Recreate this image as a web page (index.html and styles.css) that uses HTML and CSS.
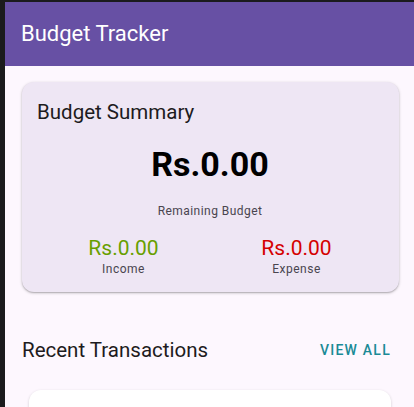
FILE: index.html
```html
<!DOCTYPE html>
<html>
<head>
<meta charset="utf-8">
<link rel="stylesheet" href="styles.css">
</head>
<body>
<div class="screen">
  <header class="appbar">
    <h1 class="appbar-title">Budget Tracker</h1>
  </header>
  <main class="content">
    <section class="summary-card">
      <h2 class="summary-title">Budget Summary</h2>
      <div class="remaining">
        <div class="remaining-amount">Rs.0.00</div>
        <div class="remaining-label">Remaining Budget</div>
      </div>
      <div class="split">
        <div class="split-col">
          <div class="split-amount income">Rs.0.00</div>
          <div class="split-label">Income</div>
        </div>
        <div class="split-col">
          <div class="split-amount expense">Rs.0.00</div>
          <div class="split-label">Expense</div>
        </div>
      </div>
    </section>
    <div class="section-head">
      <h2 class="section-title">Recent Transactions</h2>
      <span class="view-all">VIEW ALL</span>
    </div>
    <div class="tx-card"></div>
  </main>
</div>
</body>
</html>
```
FILE: styles.css
```css
html, body {
  margin: 0;
  padding: 0;
  height: 100%;
  background: #1b1b1d;
  overflow: hidden;
}
body {
  font-family: Roboto, "Noto Sans", sans-serif;
}
.screen {
  margin-left: 5px;
  margin-top: 2px;
  height: calc(100% - 2px);
  background: #fdf7fe;
  display: flex;
  flex-direction: column;
  overflow: hidden;
}
.appbar {
  height: 64px;
  background: #6750a4;
  display: flex;
  align-items: center;
  padding: 0 16px;
  flex-shrink: 0;
}
.appbar-title {
  margin: 0;
  color: #ffffff;
  font-size: 22px;
  font-weight: 400;
  padding-bottom: 1px;
}
.content {
  padding: 16px 15px 0 17px;
  display: flex;
  flex-direction: column;
}
.summary-card {
  background: #eee6f4;
  border-radius: 12px;
  box-shadow: 0 1px 3px rgba(0,0,0,0.25), 0 1px 1px rgba(0,0,0,0.12);
  padding: 16px 16px 0 15px;
  height: 210px;
  box-sizing: border-box;
}
.summary-title {
  margin: 0;
  font-size: 20.5px;
  font-weight: 450;
  color: #1d1b20;
  line-height: 24px;
  padding-top: 2px;
}
.remaining {
  display: flex;
  flex-direction: column;
  align-items: center;
  margin-top: 20px;
}
.remaining-amount {
  font-size: 34px;
  font-weight: 700;
  color: #000000;
  line-height: 40px;
}
.remaining-label {
  font-size: 12px;
  color: #49454f;
  letter-spacing: 0.45px;
  margin-top: 19px;
  line-height: 16px;
}
.split {
  display: flex;
  margin-top: 16px;
}
.split-col {
  flex: 1;
  display: flex;
  flex-direction: column;
  align-items: center;
}
.split-amount {
  font-size: 21px;
  font-weight: 400;
  line-height: 26px;
}
.income { color: #689f00; }
.expense { color: #d50000; }
.split-label {
  font-size: 12px;
  color: #49454f;
  letter-spacing: 0.5px;
  line-height: 16px;
}
.section-head {
  display: flex;
  justify-content: space-between;
  align-items: center;
  margin-top: 44px;
  padding-right: 8px;
}
.section-title {
  margin: 0;
  font-size: 20.5px;
  font-weight: 450;
  color: #1d1b20;
  line-height: 28px;
}
.view-all {
  font-size: 14px;
  font-weight: 500;
  letter-spacing: 1.25px;
  color: #1a8a96;
}
.tx-card {
  margin: 26px 8px 0 7px;
  height: 60px;
  flex-shrink: 0;
  background: #ffffff;
  border-radius: 12px;
  box-shadow: 0 1px 3px rgba(0,0,0,0.18);
}
```
